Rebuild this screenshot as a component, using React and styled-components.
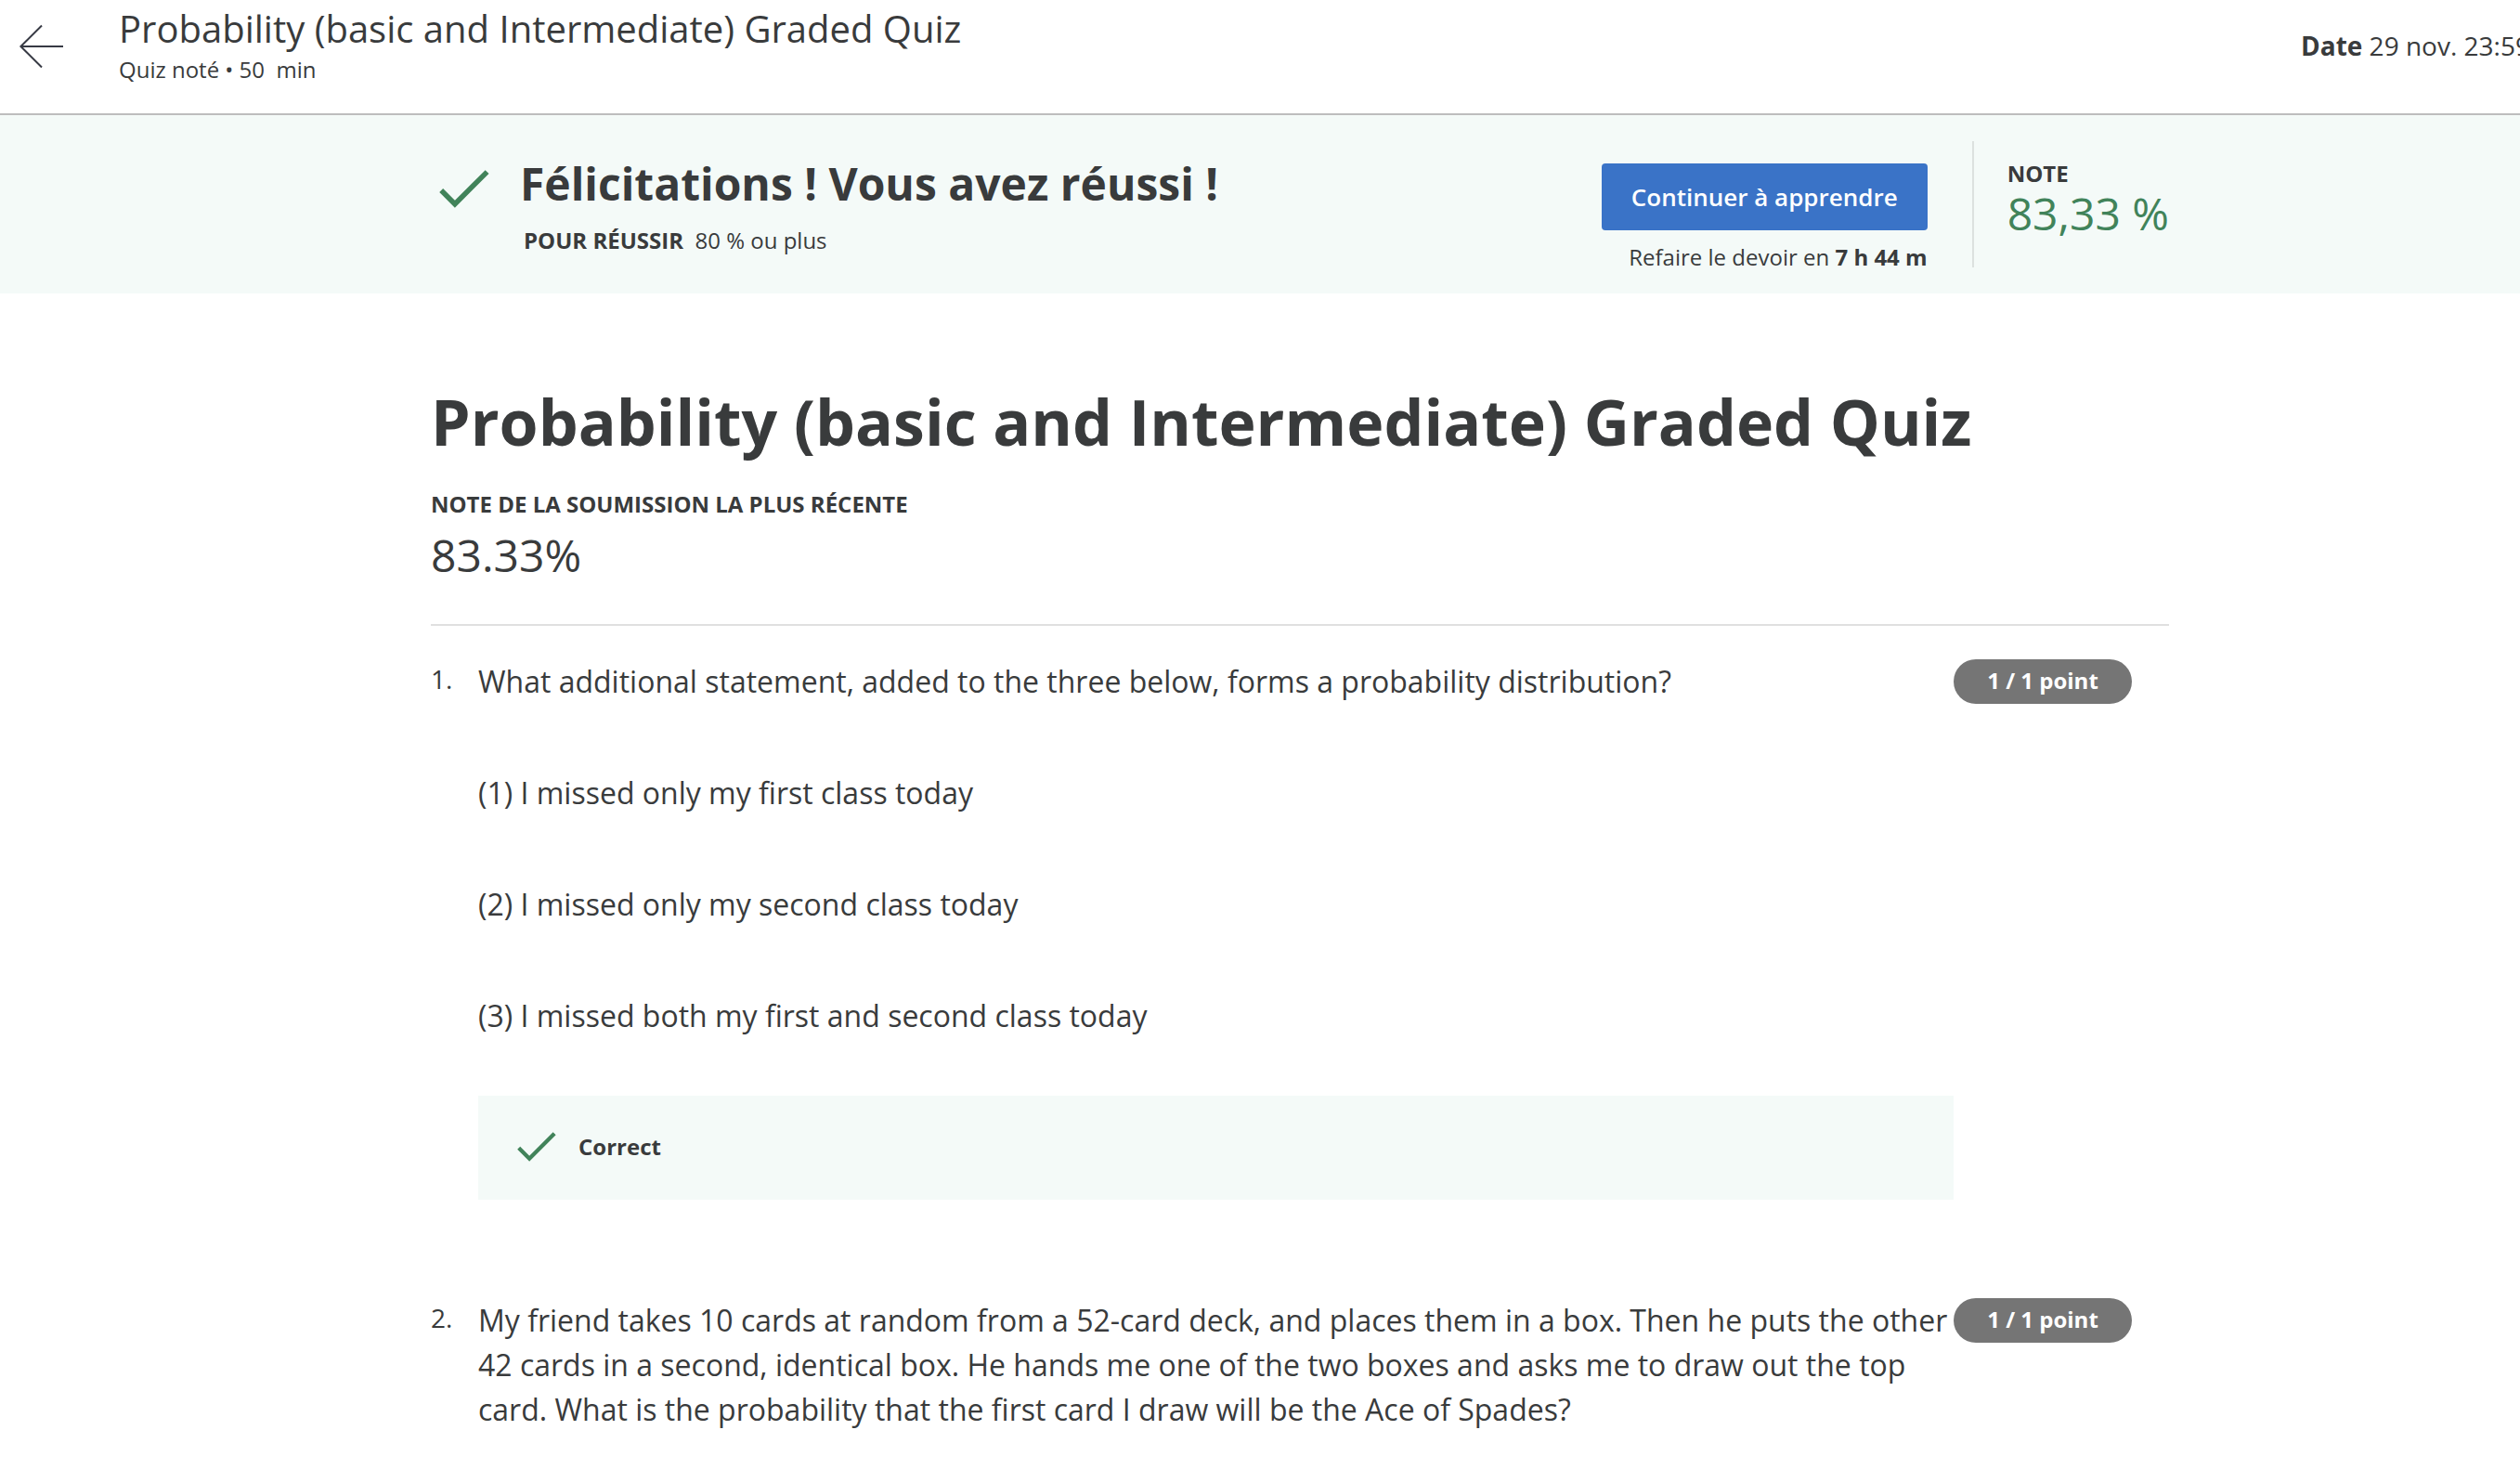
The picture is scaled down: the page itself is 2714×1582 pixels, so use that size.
import React from "react";
import styled, { createGlobalStyle } from "styled-components";

const GlobalStyle = createGlobalStyle`
  *, *::before, *::after { box-sizing: border-box; }
  body {
    margin: 0;
    background: #fff;
    color: #393b3c;
    font-family: "Open Sans", "Noto Sans", sans-serif;
    font-size: 24px;
    line-height: 32px;
    overflow-x: hidden;
  }
  h1, h2, p, ol { margin: 0; padding: 0; }
`;

const Header = styled.header`
  display: flex;
  align-items: flex-start;
  height: 124px;
  padding-left: 20px;
  border-bottom: 2px solid #bdbdbd;
`;

const BackButton = styled.button`
  display: flex;
  flex: none;
  margin: 26px 60px 0 0;
  padding: 0;
  border: 0;
  background: none;
  color: #373a44;
  cursor: pointer;
`;

const HeaderText = styled.div`
  flex: 1;
  min-width: 0;
  padding-top: 3px;
`;

const HeaderTitle = styled.p`
  font-size: 40px;
  line-height: 56px;
`;

const HeaderMeta = styled.p`
  white-space: pre;
`;

const DueDate = styled.p`
  flex: 0 0 236px;
  padding-top: 29px;
  overflow: hidden;
  white-space: nowrap;
  font-size: 28px;
  line-height: 40px;
`;

const Banner = styled.section`
  display: flex;
  align-items: flex-start;
  min-height: 192px;
  padding: 28px 378px 20px 464px;
  background: #f4faf8;
`;

const BannerIcon = styled.span`
  display: flex;
  flex: none;
  margin: 31px 33px 0 9px;
`;

const BannerMessage = styled.div`
  flex: 1;
  padding-top: 14px;
`;

const BannerTitle = styled.h2`
  font-size: 48px;
  line-height: 64px;
`;

const PassLine = styled.p`
  padding: 13px 0 0 4px;
  white-space: pre;
`;

const BannerAction = styled.div`
  display: flex;
  flex-direction: column;
  align-items: flex-end;
  gap: 13px;
  padding-top: 24px;
`;

const PrimaryButton = styled.button`
  height: 72px;
  padding: 0 32px;
  border: 0;
  border-radius: 4px;
  background: #3a73c7;
  color: #fff;
  font: 600 26px/36px "Open Sans", "Noto Sans", sans-serif;
  cursor: pointer;
`;

const Grade = styled.div`
  min-height: 136px;
  margin-left: 48px;
  padding: 19px 0 0 36px;
  border-left: 2px solid #dce1df;
`;

const Label = styled.p`
  font-weight: 700;
  text-transform: uppercase;
`;

const Score = styled.p`
  color: ${(p) => (p.$passed ? "#41835a" : "inherit")};
  font-size: 48px;
  line-height: ${(p) => (p.$passed ? "54px" : "78px")};
  white-space: nowrap;
`;

const Main = styled.main`
  padding: 90px 378px 0 464px;
`;

const Summary = styled.div`
  padding-bottom: 35px;
  border-bottom: 2px solid #e0e0e0;
`;

const QuizTitle = styled.h1`
  margin-bottom: 25px;
  font-size: 68px;
  line-height: 96px;
`;

const QuestionList = styled.ol`
  display: flex;
  flex-direction: column;
  gap: 106px;
  padding: 36px 0 28px;
  list-style: none;
`;

const Question = styled.li`
  display: grid;
  grid-template-columns: 51px minmax(0, 1fr) 192px;
  align-items: start;
  margin-right: 40px;
`;

const QuestionNumber = styled.span`
  font-size: 28px;
  line-height: 42px;
`;

const Prompt = styled.div`
  display: flex;
  flex-direction: column;
  gap: 72px;
  font-size: 32px;
  line-height: 48px;
`;

const Points = styled.span`
  display: flex;
  align-items: center;
  justify-content: center;
  height: 48px;
  padding-bottom: 2px;
  border-radius: 24px;
  background: #757575;
  color: #fff;
  font-weight: 700;
`;

const Feedback = styled.div`
  display: flex;
  align-items: center;
  gap: 24px;
  height: 112px;
  margin-top: 62px;
  padding: 0 42px 2px;
  background: #f4faf8;
  font-weight: 700;
`;

const CheckIcon = ({ width, height }) => (
  <svg width={width} height={height} viewBox="0 0 54 41" fill="none" aria-hidden="true">
    <path d="M2.2 22 16.9 36.8 51.6 2.1" stroke="#41835a" strokeWidth="5.5" />
  </svg>
);

const questions = [
  {
    prompt: [
      "What additional statement, added to the three below, forms a probability distribution?",
      "(1) I missed only my first class today",
      "(2) I missed only my second class today",
      "(3) I missed both my first and second class today",
    ],
    correct: true,
  },
  {
    prompt: [
      "My friend takes 10 cards at random from a 52-card deck, and places them in a box. Then he puts the other 42 cards in a second, identical box. He hands me one of the two boxes and asks me to draw out the top card. What is the probability that the first card I draw will be the Ace of Spades?",
    ],
  },
];

export default function App() {
  return (
    <>
      <GlobalStyle />
      <Header>
        <BackButton aria-label="Retour">
          <svg width="48" height="48" viewBox="0 0 48 48" fill="none" stroke="currentColor" strokeWidth="2" aria-hidden="true">
            <path d="M48 24H2M25 1.5 2.4 24 25 46.5" />
          </svg>
        </BackButton>
        <HeaderText>
          <HeaderTitle>Probability (basic and Intermediate) Graded Quiz</HeaderTitle>
          <HeaderMeta>{"Quiz noté • 50  min"}</HeaderMeta>
        </HeaderText>
        <DueDate>
          <b>Date</b> 29 nov. 23:59
        </DueDate>
      </Header>
      <Banner>
        <BannerIcon>
          <CheckIcon width={54} height={41} />
        </BannerIcon>
        <BannerMessage>
          <BannerTitle>Félicitations ! Vous avez réussi !</BannerTitle>
          <PassLine>
            <b>POUR RÉUSSIR</b>
            {"  80 % ou plus"}
          </PassLine>
        </BannerMessage>
        <BannerAction>
          <PrimaryButton>Continuer à apprendre</PrimaryButton>
          <p>
            Refaire le devoir en <b>7 h 44 m</b>
          </p>
        </BannerAction>
        <Grade>
          <Label>Note</Label>
          <Score $passed>83,33 %</Score>
        </Grade>
      </Banner>
      <Main>
        <Summary>
          <QuizTitle>Probability (basic and Intermediate) Graded Quiz</QuizTitle>
          <Label>Note de la soumission la plus récente</Label>
          <Score>83.33%</Score>
        </Summary>
        <QuestionList>
          {questions.map((question, i) => (
            <Question key={i}>
              <QuestionNumber>{i + 1}.</QuestionNumber>
              <div>
                <Prompt>
                  {question.prompt.map((text) => (
                    <p key={text}>{text}</p>
                  ))}
                </Prompt>
                {question.correct && (
                  <Feedback>
                    <CheckIcon width={42} height={32} />
                    Correct
                  </Feedback>
                )}
              </div>
              <Points>1 / 1 point</Points>
            </Question>
          ))}
        </QuestionList>
      </Main>
    </>
  );
}
